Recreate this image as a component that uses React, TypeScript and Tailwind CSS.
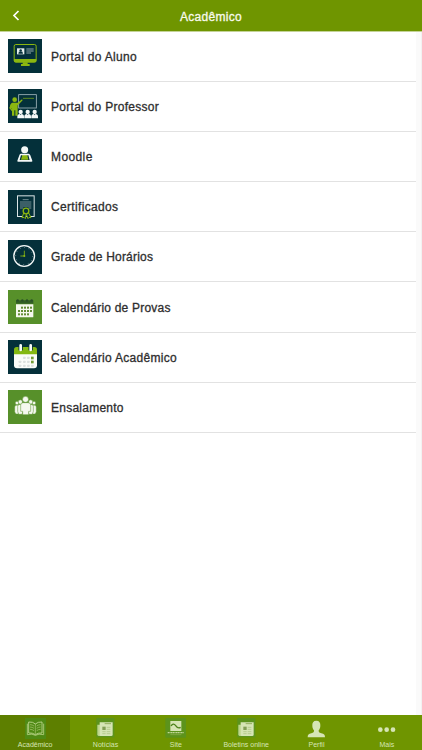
import React from 'react';

const navy = '#04303a';
const lime = '#8bb710';

const MonitorIcon = () => (
    <>
        <rect width="102" height="102" fill={navy} />
        <rect x="18.5" y="16.5" width="66" height="53" rx="5" fill={navy} stroke={lime} strokeWidth="3" />
        <path d="M18 60h67v5q0 5-5 5H23q-5 0-5-5z" fill={lime} />
        <path d="M44 70h15v5h6v6H39v-6h5z" fill={lime} />
        <rect x="27" y="28" width="22" height="18" fill="#e8f0ee" />
        <circle cx="38" cy="34" r="3.5" fill={navy} />
        <path d="M31 44q0-7 7-7t7 7z" fill={navy} />
        <path d="M55 30h22M55 36h22M55 42h14" stroke="#b9c8cb" strokeWidth="2.4" />
    </>
);

const TeacherIcon = () => (
    <>
        <rect width="102" height="102" fill={navy} />
        <rect x="32" y="17" width="53" height="40" fill="none" stroke="#a9bcc0" strokeWidth="2.4" />
        <path d="M45 28h33" stroke={lime} strokeWidth="2" />
        <circle cx="20" cy="32" r="7" fill={lime} />
        <path d="M13 41h16l13-10 2 3-13 13-2 2v31h-7V64h-3v16h-7V60l-6-5q-1-10 7-14z" fill={lime} />
        <path d="M12 45l-6 12 8 9" fill="none" stroke={lime} strokeWidth="4" />
        {[38, 59, 80].map((x) => (
            <g key={x} fill="#f4f8f7">
                <circle cx={x} cy="69" r="6.5" />
                <path d={`M${x - 10} 88v-5q0-8 8-8l2 4 2-4q8 0 8 8v5z`} />
            </g>
        ))}
    </>
);

const ReaderIcon = () => (
    <>
        <rect width="102" height="102" fill={navy} />
        <circle cx="50" cy="32" r="10.5" fill="#f4f8f7" />
        <path d="M38 44h24q3 0 5 5l6 16q1 3-3 3H31q-4 0-3-3l6-16q1-5 4-5z" fill="#f4f8f7" />
        <path d="M39 48l11 5 11-5 4 15H35z" fill={navy} />
        <path d="M43 49h15l3 13H39z" fill={lime} />
    </>
);

const CertificateIcon = () => (
    <>
        <rect width="102" height="102" fill={navy} />
        <rect x="28.5" y="17.5" width="50" height="62" fill="none" stroke="#dbe5e6" strokeWidth="3" />
        <path d="M44 29h18M36 36h34M36 42h34M36 48h34M36 54h10M61 54h9" stroke="#9fb3b7" strokeWidth="2.2" />
        <path d="M47 69l-5 14 6-1 4 4 3-13 5 13 3-4 6 1-7-14" fill={navy} stroke={lime} strokeWidth="3" />
        <circle cx="54" cy="63" r="8.5" fill={navy} stroke={lime} strokeWidth="4" />
    </>
);

const ClockIcon = () => (
    <>
        <rect width="102" height="102" fill={navy} />
        <circle cx="48.5" cy="48" r="31" fill="none" stroke="#f4f8f7" strokeWidth="4" />
        <circle cx="48.5" cy="48" r="25.5" fill="none" stroke="#a9bcc0" strokeWidth="3" strokeDasharray="1.7 11.65" />
        <path d="M49 32v16H37" fill="none" stroke={lime} strokeWidth="2.5" />
        <circle cx="49" cy="48" r="3" fill={lime} />
    </>
);

const ExamCalendarIcon = () => (
    <>
        <rect width="102" height="102" fill="#57902a" />
        <path d="M24 31h52v10H24z" fill="#315e25" />
        {[29, 43, 57, 71].map((x) => (
            <circle key={x} cx={x} cy="31" r="3.5" fill="#294f28" />
        ))}
        <path d="M24 43h52v37q0 2-2 2H26q-2 0-2-2z" fill="#f5f8ee" />
        {[[40, 50], [49, 50], [58, 50], [67, 50], [31, 60], [40, 60], [49, 60], [58, 60], [67, 60], [31, 70], [40, 70], [49, 70], [58, 70]].map(([x, y]) => (
            <rect key={`${x}-${y}`} x={x - 1} y={y} width="6" height="6" fill="#628d34" />
        ))}
    </>
);

const CalendarIcon = () => (
    <>
        <rect width="102" height="102" fill={navy} />
        <path d="M18 42h69v34q0 9-9 9H27q-9 0-9-9z" fill="#fafcf9" />
        <path d="M18 43V29q0-8 8-8h53q8 0 8 8v14z" fill="#83b811" />
        <path d="M38 17v14M68 17v14" stroke={navy} strokeWidth="13" />
        <path d="M38 16v14M68 16v14" stroke="#fafcf9" strokeWidth="8" strokeLinecap="round" />
        {[[45, 50], [57, 50], [32, 62], [45, 62], [57, 62], [32, 74], [45, 74], [57, 74]].map(([x, y]) => (
            <rect key={`${x}-${y}`} x={x} y={y} width="8" height="7" rx="2" fill="#dce1df" />
        ))}
        {[50, 62].map((y) => (
            <rect key={y} x="69" y={y} width="8" height="8" fill="#719b32" />
        ))}
        <rect x="69" y="74" width="8" height="7" rx="2" fill="#dce1df" />
    </>
);

const PeopleIcon = () => (
    <>
        <rect width="102" height="102" fill="#57902a" />
        <g fill="#f5f8ee" stroke="#57902a" strokeWidth="1.5">
            {[27, 78].map((x) => (
                <g key={x}>
                    <path d={`M${x - 7} 65V51q0-6 7-6t7 6v14l-3 7h-8z`} />
                    <circle cx={x} cy="39" r="5.5" />
                </g>
            ))}
            {[37, 68].map((x) => (
                <g key={x}>
                    <path d={`M${x - 8} 64V49q0-6 8-6t8 6v15l-3 9H${x - 5}z`} />
                    <circle cx={x} cy="36" r="6.5" />
                </g>
            ))}
            <path d="M38 64V45q0-7 8-7h14q8 0 8 7v19h-6v10H44V64z" />
            <circle cx="52.5" cy="28" r="9" />
        </g>
    </>
);

const items = [
    { label: 'Portal do Aluno', icon: MonitorIcon, track: 'tracking-[0.3px]' },
    { label: 'Portal do Professor', icon: TeacherIcon, track: 'tracking-[0.28px]' },
    { label: 'Moodle', icon: ReaderIcon, track: 'tracking-[0.4px]' },
    { label: 'Certificados', icon: CertificateIcon, track: 'tracking-[0.33px]' },
    { label: 'Grade de Horários', icon: ClockIcon, track: 'tracking-[0.2px]' },
    { label: 'Calendário de Provas', icon: ExamCalendarIcon, track: 'tracking-[0.21px]' },
    { label: 'Calendário Acadêmico', icon: CalendarIcon, track: 'tracking-[0.3px]' },
    { label: 'Ensalamento', icon: PeopleIcon, track: 'tracking-[0.25px]' },
];

const BookIcon = () => (
    <>
        <rect width="63" height="63" fill="#4f8a14" />
        <path d="M7 17v33q15-4 24 2 10-6 25-2V17" fill="none" stroke="#b5cf82" strokeWidth="2.5" />
        <path d="M11 12q13-1 20 6 8-7 20-6v33q-12-1-20 5-8-6-20-5z" fill="#4f8a14" stroke="#c5dc98" strokeWidth="2.5" />
        <path d="M31 18v31M15 20q7 0 12 4M15 27q7 0 12 4M15 34q7 0 12 4M47 20q-7 0-12 4M47 27q-7 0-12 4M47 34q-7 0-12 4" fill="none" stroke="#adc975" strokeWidth="2" />
    </>
);

const NewsIcon = () => (
    <>
        <rect x="4" width="54" height="58" fill="#5c931c" />
        <path d="M8 20h10v34h-7q-4 0-4-5V20z" fill="#bdd58c" />
        <path d="M14 13h39v37q0 4-4 4H17q-3 0-3-4z" fill="#d6e5b5" />
        <path d="M29 17h19" stroke="#91ad5c" strokeWidth="3" />
        <rect x="22" y="26" width="10" height="10" fill="#829e55" />
        <path d="M35 28h11M35 34h11M22 41h10M35 41h11M22 47h10M35 47h11" stroke="#a8bf7b" strokeWidth="2" />
    </>
);

const SiteIcon = () => (
    <>
        <rect x="1" width="62" height="59" fill="#5c931c" />
        <rect x="16" y="9" width="33" height="30" fill="#d6e5b5" />
        <path d="M18 24q7-11 14-1t15 5" fill="none" stroke="#4c821a" strokeWidth="4" />
        <path d="M8 44h48" stroke="#c0d695" strokeWidth="4" strokeDasharray="4 1" />
        <path d="M16 50h33" stroke="#8fb153" strokeWidth="2" />
    </>
);

const ProfileIcon = () => (
    <path d="M31 8c9 0 13 6 12 15 0 6-2 10-5 14 0 6 1 7 8 9 8 2 11 4 11 12H5c0-8 3-10 11-12 7-2 8-3 8-9-3-4-5-8-5-14-1-9 3-15 12-15z" fill="#d6e5b5" />
);

const MoreIcon = () => (
    <g fill="#d6e5b5">
        <circle cx="13" cy="35" r="7" />
        <circle cx="32" cy="35" r="7" />
        <circle cx="51" cy="35" r="7" />
    </g>
);

const tabs = [
    { label: 'Acadêmico', icon: BookIcon },
    { label: 'Notícias', icon: NewsIcon },
    { label: 'Site', icon: SiteIcon },
    { label: 'Boletins online', icon: NewsIcon },
    { label: 'Perfil', icon: ProfileIcon },
    { label: 'Mais', icon: MoreIcon },
];

export default function App() {
    return (
        <div className="flex h-[750px] w-[422px] flex-col overflow-hidden bg-white font-['Liberation_Sans',Arial,sans-serif]">
            <header className="grid h-[31px] shrink-0 grid-cols-[40px_1fr_40px] items-center bg-[#6f9500]">
                <button aria-label="Voltar" className="pl-3">
                    <svg width="8" height="11" viewBox="0 0 8 11" fill="none">
                        <path d="M6.5 1L2 5.5 6.500 10" stroke="#fff" strokeWidth="1.7" />
                    </svg>
                </button>
                <h1 className="pt-0.5 text-center text-[12px] leading-4 tracking-[0.3px] text-[#f8faed] [-webkit-text-stroke:0.3px]">Acadêmico</h1>
            </header>

            <main className="flex min-h-0 flex-1 border-t border-[#c4d397]">
                <ul className="-mt-px flex-1 pt-[0.5px]">
                    {items.map(({ label, icon: Icon, track }) => (
                        <li key={label} className="flex h-[50.2px] items-center gap-[9px] border-b border-[#e2e2e2] pl-2">
                            <svg className="shrink-0" width="34" height="34" viewBox="0 0 102 102">
                                <Icon />
                            </svg>
                            <span className={`whitespace-nowrap pt-px text-[12px] leading-4 text-[#2e2e2e] [-webkit-text-stroke:0.3px] ${track}`}>{label}</span>
                        </li>
                    ))}
                </ul>
                <div className="w-[6px] border-r border-[#f2f2f2] bg-[#fafafa]" />
            </main>

            <nav className="grid h-[35px] shrink-0 grid-cols-6 bg-[#6f9500]">
                {tabs.map(({ label, icon: Icon }, i) => (
                    <button key={label} className={`flex flex-col items-center pt-[3px] ${i === 0 ? 'bg-[#5d7f00]' : ''}`}>
                        <svg className="shrink-0" width="21" height="21" viewBox="0 0 63 63">
                            <Icon />
                        </svg>
                        <span className="whitespace-nowrap pt-px text-[7px] leading-[9px] text-[#d6e5b5]">{label}</span>
                    </button>
                ))}
            </nav>
        </div>
    );
}
